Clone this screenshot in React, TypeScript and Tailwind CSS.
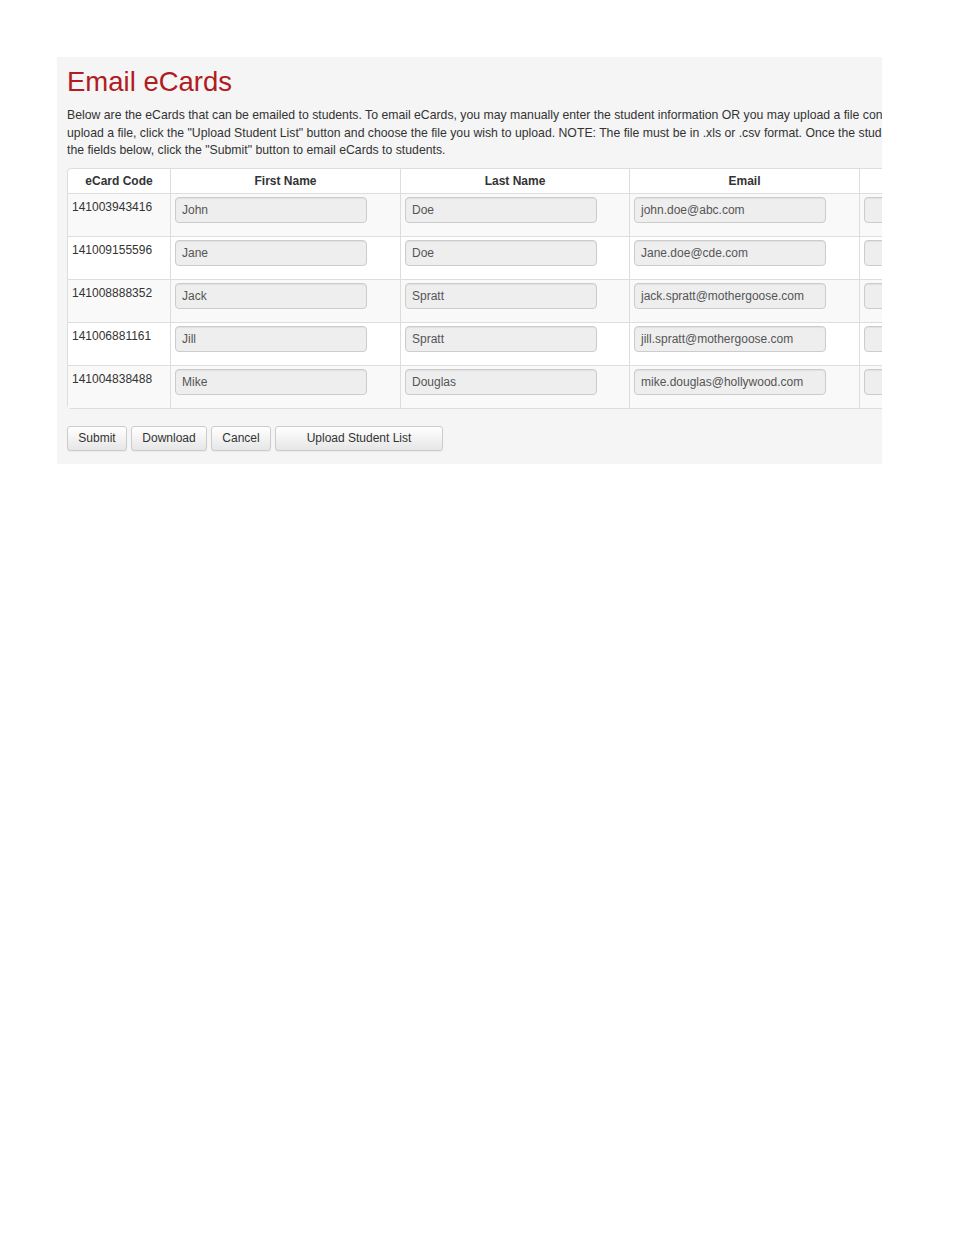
import React from "react";

const rows = [
  { code: "141003943416", first: "John", last: "Doe", email: "john.doe@abc.com" },
  { code: "141009155596", first: "Jane", last: "Doe", email: "Jane.doe@cde.com" },
  { code: "141008888352", first: "Jack", last: "Spratt", email: "jack.spratt@mothergoose.com" },
  { code: "141006881161", first: "Jill", last: "Spratt", email: "jill.spratt@mothergoose.com" },
  { code: "141004838488", first: "Mike", last: "Douglas", email: "mike.douglas@hollywood.com" },
];

function Field({ value }: { value: string }) {
  return (
    <div className="w-[192px] h-[26px] rounded-[4px] border border-[#cccccc] bg-[#eeeeee] pl-[6px] flex items-center text-[12px] text-[#555555] shadow-[inset_0_1px_1px_rgba(0,0,0,0.06)]">
      {value}
    </div>
  );
}

function Btn({ label, w }: { label: string; w: string }) {
  return (
    <button
      className={`${w} h-[25px] rounded-[3px] border border-[#cccccc] bg-gradient-to-b from-white to-[#e6e6e6] text-[12px] text-[#333333] flex items-center justify-center shadow-[0_1px_1px_rgba(0,0,0,0.05)]`}
    >
      {label}
    </button>
  );
}

export default function App() {
  return (
    <div className="w-[954px] h-[1235px] bg-white font-['Liberation_Sans',Arial,sans-serif]">
      <div className="ml-[57px] pt-[57px]">
        <div className="w-[825px] h-[407px] bg-[#f5f5f5] overflow-hidden pl-[10px] pt-[9px]">
          <h1 className="text-[27.5px] leading-[32px] text-[#b01c22] font-normal">Email eCards</h1>
          <p className="mt-[9px] text-[12.25px] leading-[17.5px] text-[#333333] whitespace-nowrap w-[1000px]">
            Below are the eCards that can be emailed to students. To email eCards, you may manually enter the student information OR you may upload a file containing
            <br />
            upload a file, click the "Upload Student List" button and choose the file you wish to upload. NOTE: The file must be in .xls or .csv format. Once the student
            <br />
            the fields below, click the "Submit" button to email eCards to students.
          </p>
          <table className="mt-[8px] w-[1030px] border-separate border-spacing-0 border border-[#dddddd] rounded-[4px] bg-white text-[12px] text-[#333333] table-fixed">
            <colgroup>
              <col className="w-[102px]" />
              <col className="w-[230px]" />
              <col className="w-[229px]" />
              <col className="w-[230px]" />
              <col className="w-[239px]" />
            </colgroup>
            <thead>
              <tr className="h-[24px]">
                <th className="font-bold text-center align-middle">eCard Code</th>
                <th className="font-bold text-center align-middle border-l border-[#dddddd]">First Name</th>
                <th className="font-bold text-center align-middle border-l border-[#dddddd]">Last Name</th>
                <th className="font-bold text-center align-middle border-l border-[#dddddd]">Email</th>
                <th className="font-bold text-center align-middle border-l border-[#dddddd]"></th>
              </tr>
            </thead>
            <tbody>
              {rows.map((r, i) => (
                <tr key={r.code} className={i % 2 === 0 ? "bg-[#f9f9f9]" : "bg-white"}>
                  <td className="h-[43px] border-t border-[#dddddd] align-top pl-[4px] pt-[5px] leading-[17px]">{r.code}</td>
                  <td className="h-[43px] border-t border-l border-[#dddddd] align-top pl-[4px] pt-[3px]">
                    <Field value={r.first} />
                  </td>
                  <td className="h-[43px] border-t border-l border-[#dddddd] align-top pl-[4px] pt-[3px]">
                    <Field value={r.last} />
                  </td>
                  <td className="h-[43px] border-t border-l border-[#dddddd] align-top pl-[4px] pt-[3px]">
                    <Field value={r.email} />
                  </td>
                  <td className="h-[43px] border-t border-l border-[#dddddd] align-top pl-[4px] pt-[3px]">
                    <Field value="" />
                  </td>
                </tr>
              ))}
            </tbody>
          </table>
          <div className="mt-[17px] flex gap-[4px]">
            <Btn label="Submit" w="w-[60px]" />
            <Btn label="Download" w="w-[76px]" />
            <Btn label="Cancel" w="w-[60px]" />
            <Btn label="Upload Student List" w="w-[168px]" />
          </div>
        </div>
      </div>
    </div>
  );
}
